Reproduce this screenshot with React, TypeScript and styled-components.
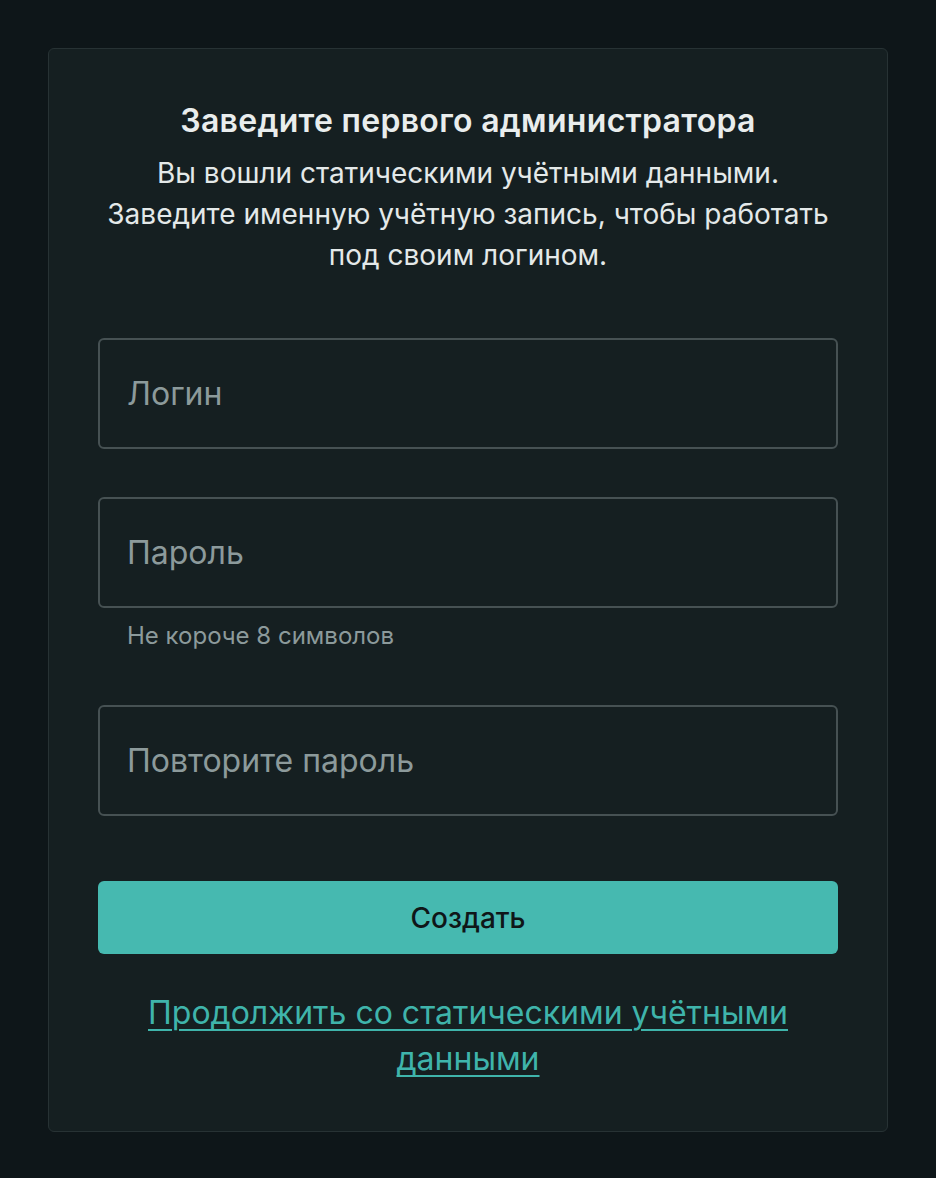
import React, { useState } from 'react';
import styled, { createGlobalStyle } from 'styled-components';

const GlobalStyle = createGlobalStyle`
    * {
        box-sizing: border-box;
    }
    body {
        margin: 0;
        background-color: #0e1619;
        font-family: Inter, 'Noto Sans', 'Liberation Sans', sans-serif;
    }
`;

const Page = styled.div`
    min-height: 1178px;
    padding: 48px;
    display: flex;
    justify-content: center;
    align-items: flex-start;
`;

const Card = styled.form`
    width: 840px;
    background-color: #151f21;
    border: 1px solid #273234;
    border-radius: 6px;
    padding: 53px 49px 49px;
    display: flex;
    flex-direction: column;
`;

const Title = styled.h1`
    margin: 0;
    font-size: 32px;
    line-height: 38px;
    font-weight: 600;
    letter-spacing: 0.3px;
    color: #e9eded;
    text-align: center;
`;

const Subtitle = styled.p`
    margin: 13px 0 62px;
    font-size: 28px;
    line-height: 41px;
    color: #e4e9e9;
    text-align: center;
`;

const Field = styled.div<{ $gap: number }>`
    display: flex;
    flex-direction: column;
    margin-bottom: ${(p) => p.$gap}px;
`;

const Input = styled.input`
    width: 100%;
    height: 111px;
    padding: 0 27px;
    background-color: transparent;
    border: 2px solid #465153;
    border-radius: 6px;
    font-family: inherit;
    font-size: 32px;
    color: #e4e9e9;
    outline: none;

    &::placeholder {
        color: #8c9a9b;
    }
`;

const Hint = styled.span`
    margin-top: 13px;
    padding-left: 29px;
    font-size: 24px;
    line-height: 30px;
    color: #8c9a9b;
`;

const SubmitButton = styled.button`
    height: 73px;
    width: 100%;
    border: none;
    border-radius: 6px;
    background-color: #46b9b0;
    color: #0f1618;
    font-family: inherit;
    font-size: 28px;
    font-weight: 500;
    cursor: pointer;
`;

const StaticLink = styled.a`
    display: block;
    margin: 36px auto 0;
    max-width: 680px;
    font-size: 32px;
    line-height: 46px;
    color: #3fb4ab;
    text-align: center;
    text-decoration: underline;
    text-decoration-thickness: 2px;
    text-underline-offset: 5px;
    cursor: pointer;
`;

const App = () => {
    const [login, setLogin] = useState<string>('');
    const [password, setPassword] = useState<string>('');
    const [repeat, setRepeat] = useState<string>('');

    const submitHandler = (e: React.FormEvent) => {
        e.preventDefault();
    };

    return (
        <>
            <GlobalStyle />
            <Page>
                <Card onSubmit={submitHandler}>
                    <Title>Заведите первого администратора</Title>
                    <Subtitle>
                        Вы вошли статическими учётными данными.
                        <br />
                        Заведите именную учётную запись, чтобы работать
                        <br />
                        под своим логином.
                    </Subtitle>
                    <Field $gap={48}>
                        <Input
                            placeholder='Логин'
                            value={login}
                            onChange={(e) => setLogin(e.target.value)}
                        />
                    </Field>
                    <Field $gap={54}>
                        <Input
                            type='password'
                            placeholder='Пароль'
                            value={password}
                            onChange={(e) => setPassword(e.target.value)}
                        />
                        <Hint>Не короче 8 символов</Hint>
                    </Field>
                    <Field $gap={65}>
                        <Input
                            type='password'
                            placeholder='Повторите пароль'
                            value={repeat}
                            onChange={(e) => setRepeat(e.target.value)}
                        />
                    </Field>
                    <SubmitButton type='submit'>Создать</SubmitButton>
                    <StaticLink>Продолжить со статическими учётными данными</StaticLink>
                </Card>
            </Page>
        </>
    );
};

export default App;
